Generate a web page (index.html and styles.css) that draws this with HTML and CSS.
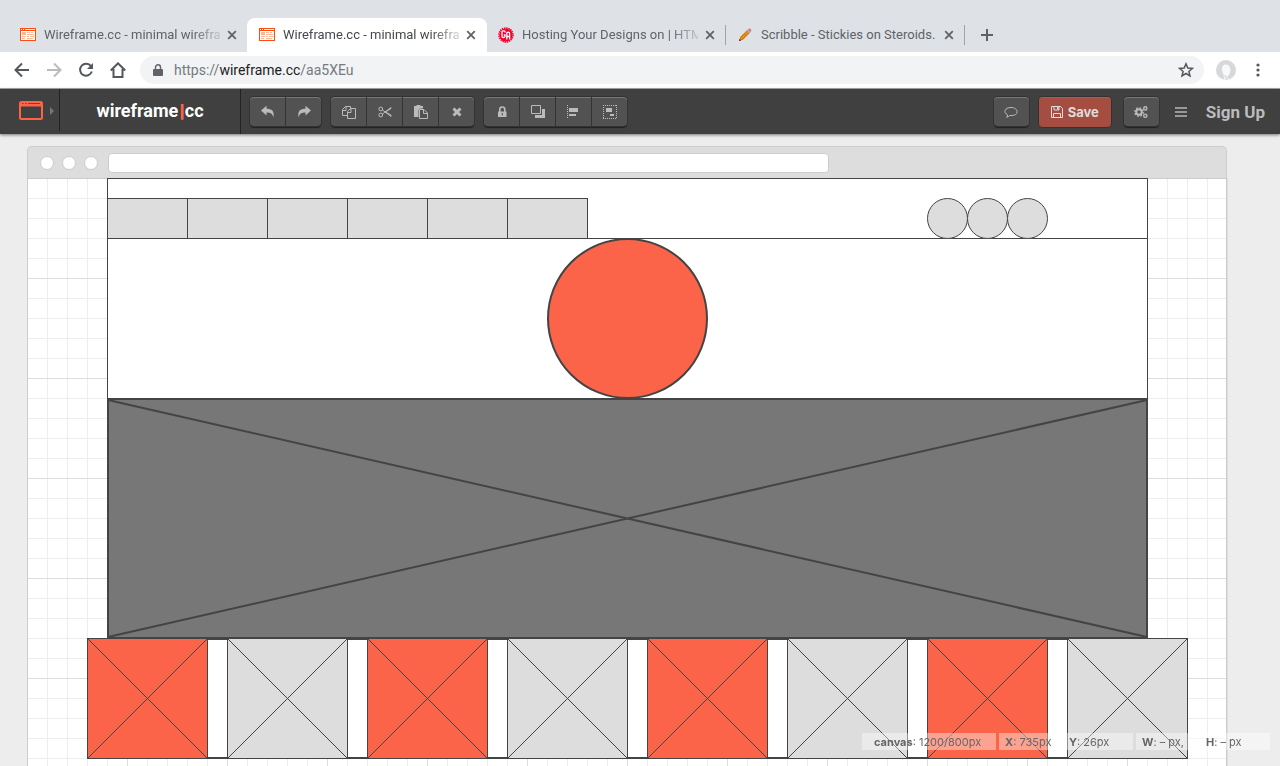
FILE: index.html
```html
<!DOCTYPE html>
<html lang="en">
<head>
<meta charset="utf-8">
<title>Wireframe.cc - minimal wireframing tool</title>
<link rel="stylesheet" href="styles.css">
</head>
<body>
<svg class="defs" aria-hidden="true">
  <symbol id="fav-wf" viewBox="0 0 16 14">
    <rect x="0" y="0" width="16" height="13" fill="#fff"/>
    <path d="M0 0h16v3H0zM0 3h1v10H0zM15 3h1v10h-1zM0 12h16v1H0z" fill="#fa4f14"/>
    <path d="M1 1h1v1H1zM3 1h1v1H3zM5 1h10v1H5z" fill="#fff"/>
    <path d="M2 4h4v3H2zM2 8h4v1H2zM2 10h3v1H2zM7 4h3v1H7zM11 4h2v1h-2zM7 6h7v1H7zM7 8h2v1H7zM10 8h4v1h-4zM7 10h6v1H7z" fill="#fdb594"/>
  </symbol>
  <symbol id="x" viewBox="0 0 10 10"><path d="M1.2 1.2l7.6 7.6M8.8 1.2L1.2 8.8" stroke="#5f6368" stroke-width="1.8"/></symbol>
</svg>
<header class="tabs">
  <div class="tab">
    <svg class="fav"><use href="#fav-wf"/></svg>
    <span class="tab-title fade">Wireframe.cc - minimal wirefra</span>
    <button class="close" aria-label="Close tab"><svg><use href="#x"/></svg></button>
  </div>
  <div class="tab active">
    <svg class="fav"><use href="#fav-wf"/></svg>
    <span class="tab-title fade">Wireframe.cc - minimal wirefra</span>
    <button class="close" aria-label="Close tab"><svg><use href="#x"/></svg></button>
  </div>
  <div class="tab sep">
    <svg class="fav ga" viewBox="0 0 16 16"><circle cx="8" cy="8" r="6.6" fill="#f6002d"/><circle cx="8" cy="8" r="7" fill="none" stroke="#f6002d" stroke-width="1.6" stroke-dasharray="1.4 .8"/><path d="M7 5.4V4.600q0-.8-1.400-.8T4 4.600v5q0 .9 1.400.9T7 9.600V8H5.800M8.800 12.500V6.200q0-1 1.400-1t1.400 1v6.300M8.800 9.500h2.800" fill="none" stroke="#fff" stroke-width="1.300"/></svg>
    <span class="tab-title fade">Hosting Your Designs on | HTM</span>
    <button class="close" aria-label="Close tab"><svg><use href="#x"/></svg></button>
  </div>
  <div class="tab sep">
    <svg class="fav pencil" viewBox="0 0 16 16"><path d="M2 14l1.200-4L10 3.200l2.800 2.800L6 12.800z" fill="#d97a06"/><path d="M4.500 11.500l6.800-6.800" stroke="#f8b64c" stroke-width="1" stroke-dasharray="1.500 .6"/><path d="M9.600 3.600l1.400-1.400L13.800 5l-1.400 1.400z" fill="#a9b0b5"/><path d="M11 2.200q1.400-1.400 2.600-.2 1.400 1.400.2 3z" fill="#f0656b"/><path d="M2 14l.6-2 1.400 1.400z" fill="#222"/></svg>
    <span class="tab-title">Scribble - Stickies on Steroids.</span>
    <button class="close" aria-label="Close tab"><svg><use href="#x"/></svg></button>
  </div>
  <button class="new-tab" aria-label="New tab"><svg viewBox="0 0 12 12"><path d="M6 0v12M0 6h12" stroke="#5f6368" stroke-width="2"/></svg></button>
</header>
<nav class="browser-bar">
  <button aria-label="Back"><svg viewBox="0 0 16 16"><path d="M15 8H2M8 1.500L1.500 8 8 14.500"/></svg></button>
  <button aria-label="Forward" class="dim"><svg viewBox="0 0 16 16"><path d="M1 8h13M8 1.500L14.500 8 8 14.500"/></svg></button>
  <button aria-label="Reload"><svg viewBox="0 0 16 16"><path d="M13 4.200A6 6 0 1 0 13.800 9.500"/><path d="M15 1v6H9z" class="solid"/></svg></button>
  <button aria-label="Home"><svg viewBox="0 0 16 16"><path d="M.8 8.500L8 1.300l7.200 7.200M3.500 7v8h9V7"/></svg></button>
  <div class="omnibox">
    <svg class="lock" viewBox="0 0 10 13"><path d="M1 5h8q1 0 1 1v5q0 1-1 1H1q-1 0-1-1V6q0-1 1-1z" fill="#5f6368"/><path d="M2.500 5.500V3.300a2.500 2.500 0 0 1 5 0v2.200" fill="none" stroke="#5f6368" stroke-width="1.400"/></svg>
    <a class="url" href="#">https://<b>wireframe.cc</b>/aa5XEu</a>
    <button aria-label="Bookmark"><svg viewBox="0 0 16 16"><path class="thin" d="M8 1.800l1.800 4.300 4.600.3-3.500 3 1.100 4.600L8 11.500 4 14l1.100-4.600-3.500-3 4.600-.3z"/></svg></button>
  </div>
  <button aria-label="Profile" class="avatar"><svg viewBox="0 0 20 20"><circle cx="10" cy="10" r="10" fill="#d8d8d8"/><path d="M10 4.500c-3 0-4.300 2.500-4 5.500.2 2.500 1.500 3.500 1.700 5L8 19.500q3 .6 5-.4c-1.500-1.600-1-3 .3-5 1-1.600 1.200-3.500.9-5.500-.4-2.500-1.900-4.100-4.200-4.100z" fill="#f8f9fa"/><path d="M9 15l1.500 4.500 1.500-3" fill="none" stroke="#d6e3ec"/></svg></button>
  <button aria-label="Menu" class="dots"><svg viewBox="0 0 4 14"><circle cx="2" cy="2" r="1.600"/><circle cx="2" cy="7" r="1.600"/><circle cx="2" cy="12" r="1.600"/></svg></button>
</nav>
<div class="appbar">
  <button class="brand-menu" aria-label="Wireframes">
    <svg class="logo" viewBox="0 0 24 20"><rect x="1" y="1" width="22" height="17" rx="1.500" fill="none" stroke="#ff6347" stroke-width="2"/><path d="M1 3h22M1 4.500h22" stroke="#ff6347" stroke-width="2"/><path d="M3 2.500h1.500M6 2.500h1.500M9 2.500h12" stroke="#7c4238" stroke-width="1"/></svg>
    <svg class="caret" viewBox="0 0 4 8"><path d="M0 0l4 4-4 4z" fill="#777"/></svg>
  </button>
  <a class="brand" href="#">wireframe<span>|</span>cc</a>
  <div class="tools">
    <div class="group">
      <button aria-label="Undo"><svg viewBox="0 0 14 14"><path d="M0 5.500L5.500.8v3c5 0 8.200 2 6.900 8.700C11.600 8.800 9.500 7.500 5.500 7.500v3z"/></svg></button>
      <button aria-label="Redo"><svg viewBox="0 0 14 14"><path d="M14 5.500L8.500.8v3c-5 0-8.200 2-6.900 8.700C2.400 8.800 4.500 7.500 8.500 7.500v3z"/></svg></button>
    </div>
    <div class="group">
      <button aria-label="Copy"><svg viewBox="0 0 14 14"><path class="line" d="M5.500 10.500h-5V4.500l3-3h5v2.500M.5 5.500H4v-4M5.500 6.500v7h8v-10H8.500zM5.500 7.500H9v-4"/></svg></button>
      <button aria-label="Cut"><svg viewBox="0 0 14 14"><path class="line" d="M4.500 5L13 11.500V10L7.500 7 13 3.500V2.500L4.500 9"/><circle class="line" cx="2.800" cy="4" r="1.900"/><circle class="line" cx="2.800" cy="10" r="1.900"/></svg></button>
      <button aria-label="Paste"><svg viewBox="0 0 14 14"><path d="M0 1h2.500V0h4v1H9v2.500H6L4.500 5v7H0z"/><path class="line" d="M5.500 4.500v9h8V8L10 4.500zM9.500 4.500v4h4"/></svg></button>
      <button aria-label="Delete"><svg viewBox="0 0 14 14"><path d="M3.500 3.500l7 7M10.500 3.500l-7 7" stroke="#bbb" stroke-width="3"/></svg></button>
    </div>
    <div class="group">
      <button aria-label="Lock"><svg viewBox="0 0 14 14"><path fill-rule="evenodd" d="M3 6.500h8.500V12H3zM6.800 8v2.500h1V8z"/><path d="M4.800 7V4.500a2.500 2.500 0 0 1 5 0V7" fill="none" stroke="#bbb" stroke-width="1.600"/></svg></button>
      <button aria-label="Arrange"><svg viewBox="0 0 14 14"><path class="line" d="M.5.500h9v8h-9z"/><path d="M11 4h3v9H4v-3h7z"/></svg></button>
      <button aria-label="Align"><svg viewBox="0 0 14 14"><path d="M.5 0v14" stroke="#bbb" stroke-dasharray="1 1"/><path d="M2 3h9v4H2zM2 9h7v2H2z"/></svg></button>
      <button aria-label="Group"><svg viewBox="0 0 14 14"><path d="M0 .5h14M0 13.500h14M.5 0v14M13.500 0v14" fill="none" stroke="#bbb" stroke-dasharray="1 1"/><path d="M3 3h6v4H3zM7 9h4v2H7z"/></svg></button>
    </div>
  </div>
  <div class="actions">
    <div class="group"><button aria-label="Comments"><svg viewBox="0 0 14 14"><path class="line" d="M3.500 9.800C-1 7.500.6 2.500 7 2.500s8.300 5.800 3.200 7.600q-2 .7-4.400.4-1.500 1.500-3.300 1.700 1.200-1 1-2.400z"/></svg></button></div>
    <button class="save"><svg viewBox="0 0 12 12"><path class="line" d="M.5.500h9l2 2v9H.5zM3 .5v3.500h5V.500M2.500 11.500v-4h7v4"/><path d="M6 0h1.500v3.500H6z"/></svg>Save</button>
    <div class="group"><button aria-label="Settings"><svg viewBox="0 0 14 14"><circle cx="5" cy="7" r="2.800" fill="none" stroke="#bbb" stroke-width="2"/><circle cx="5" cy="7" r="4.200" fill="none" stroke="#bbb" stroke-width="1.400" stroke-dasharray="1.700 1.600"/><circle cx="11.300" cy="3.400" r="1.600" fill="none" stroke="#bbb" stroke-width="1.400"/><circle cx="11.300" cy="10.700" r="1.600" fill="none" stroke="#bbb" stroke-width="1.400"/></svg></button></div>
    <button class="burger" aria-label="Menu"><svg viewBox="0 0 12 10"><path d="M0 1h12M0 5h12M0 9h12" stroke="#999" stroke-width="2"/></svg></button>
    <a class="signup" href="#">Sign Up</a>
  </div>
</div>
<main class="workspace">
  <section class="window">
    <div class="window-bar">
      <i></i><i></i><i></i>
      <input type="text" aria-label="Wireframe address">
    </div>
    <svg class="canvas" viewBox="0 0 1201 801" width="1201" height="801">
      <defs>
        <pattern id="minor" width="20" height="20" patternUnits="userSpaceOnUse"><path d="M0 .5h20M.5 0v20" stroke="#eee"/></pattern>
        <pattern id="major" width="100" height="100" patternUnits="userSpaceOnUse"><path d="M0 .5h100M.5 0v100" stroke="#ddd"/></pattern>
        <symbol id="tile" viewBox="0 0 121 121"><rect x=".5" y=".5" width="120" height="120"/><path d="M.5.500l120 120M120.500.500l-120 120"/></symbol>
      </defs>
      <rect width="1201" height="801" fill="#fff"/>
      <rect width="1201" height="801" fill="url(#minor)"/>
      <rect width="1201" height="801" fill="url(#major)"/>
      <path d="M0 .5h1200M.5 0v801M1199.500 0v801" stroke="#ccc"/>
      <g class="ink">
        <rect class="white" x="80.500" y=".5" width="1040" height="60"/>
        <rect class="white" x="80.500" y="60.500" width="1040" height="160"/>
        <g class="grey">
          <rect x="80.500" y="20.500" width="80" height="40"/>
          <rect x="160.500" y="20.500" width="80" height="40"/>
          <rect x="240.500" y="20.500" width="80" height="40"/>
          <rect x="320.500" y="20.500" width="80" height="40"/>
          <rect x="400.500" y="20.500" width="80" height="40"/>
          <rect x="480.500" y="20.500" width="80" height="40"/>
          <circle cx="920.500" cy="40.500" r="20"/>
          <circle cx="960.500" cy="40.500" r="20"/>
          <circle cx="1000.500" cy="40.500" r="20"/>
        </g>
        <circle class="red thick" cx="600.500" cy="140.500" r="79.500"/>
        <rect class="white thick" x="81" y="461" width="1039" height="119"/>
        <rect class="dark thick" x="81" y="221" width="1039" height="239"/>
        <path class="thick" d="M81 222l1039 237M1120 222L81 459"/>
        <g class="red">
          <use href="#tile" x="60" y="460" width="121" height="121"/>
          <use href="#tile" x="340" y="460" width="121" height="121"/>
          <use href="#tile" x="620" y="460" width="121" height="121"/>
          <use href="#tile" x="900" y="460" width="121" height="121"/>
        </g>
        <g class="grey">
          <use href="#tile" x="200" y="460" width="121" height="121"/>
          <use href="#tile" x="480" y="460" width="121" height="121"/>
          <use href="#tile" x="760" y="460" width="121" height="121"/>
          <use href="#tile" x="1040" y="460" width="121" height="121"/>
        </g>
      </g>
    </svg>
  </section>
</main>
<footer class="status">
  <p class="size"><span><b>canvas</b>: 1200/800px</span></p>
  <p><span><b>X</b>: 735px</span><span><b>Y</b>: 26px</span></p>
  <p><span><b>W</b>: – px,</span><span><b>H</b>: – px</span></p>
</footer>
</body>
</html>
```
FILE: styles.css
```css
* { box-sizing: border-box; }
body {
  margin: 0;
  height: 100vh;
  display: flex;
  flex-direction: column;
  overflow: hidden;
  background: #ededed;
  font-family: Inter, "Liberation Sans", sans-serif;
}
button { border: 0; padding: 0; background: none; font: inherit; color: inherit; display: flex; align-items: center; justify-content: center; }
a { text-decoration: none; color: inherit; }
svg { display: block; flex: none; }
.defs { position: absolute; width: 0; height: 0; }

.tabs { flex: none; display: flex; height: 52px; padding: 18px 0 0 8px; background: #dee1e6; }
.tab { display: flex; align-items: center; width: 239px; height: 34px; padding: 0 10px 0 12px; font-size: 13px; line-height: 14px; color: #5f6368; }
.tab.active { width: 240px; padding-right: 11px; background: #fff; border-radius: 8px 8px 0 0; color: #45494d; }
.tab.sep { padding: 0 11px; background: linear-gradient(#a0a4a9, #a0a4a9) right 7px / 1px 20px no-repeat; }
.fav { width: 16px; height: 14px; }
.ga, .pencil { height: 16px; }
.tab-title { flex: 1; min-width: 0; margin-left: 8px; white-space: nowrap; font-family: Roboto, sans-serif; }
.fade { -webkit-mask-image: linear-gradient(to right, #000 84%, transparent 104%); mask-image: linear-gradient(to right, #000 84%, transparent 104%); }
.close { margin-left: 7px; }
.close svg { width: 10px; height: 10px; }
.new-tab { width: 44px; height: 34px; }
.new-tab svg { width: 12px; height: 12px; }

.browser-bar { flex: none; display: flex; align-items: center; height: 37px; padding: 0 6px; background: #fff; border-bottom: 1px solid #aaa; }
.browser-bar button { width: 32px; height: 28px; }
.browser-bar svg { width: 16px; height: 16px; fill: none; stroke: #54575d; stroke-width: 2; }
.browser-bar .dim svg { stroke: #bbb; }
.browser-bar .solid { fill: #54575d; stroke: none; }
.browser-bar .thin { stroke-width: 1.5px; }
.omnibox { flex: 1; display: flex; align-items: center; height: 28px; margin: 0 6px; padding: 0 2px 0 13px; background: #f1f3f4; border-radius: 14px; }
.browser-bar .lock { width: 10px; height: 13px; stroke: none; }
.url { flex: 1; margin-left: 11px; font: 14px Roboto, sans-serif; color: #757a80; }
.url b { font-weight: 400; color: #202124; }
.browser-bar .avatar svg { width: 20px; height: 20px; stroke: none; }
.browser-bar .dots svg { width: 4px; height: 14px; fill: #54575d; stroke: none; }

.appbar { flex: none; display: flex; align-items: center; height: 45px; background: #404040; color: #bbb; box-shadow: 0 1px 3px rgba(0, 0, 0, .5); z-index: 1; }
.brand-menu { align-self: flex-start; width: 60px; height: 42px; padding: 2px 5px 0 19px; justify-content: space-between; border-right: 1px solid #222; }
.logo { width: 24px; height: 20px; }
.caret { width: 4px; height: 8px; }
.brand { align-self: stretch; width: 181px; border-right: 1px solid #222; text-align: center; font: bold 18px/44px Roboto, sans-serif; color: #fff; }
.brand span { margin: 0 1px; color: #ff6347; text-shadow: 1px 0 #ff6347; }
.tools { display: flex; gap: 10px; margin-left: 9px; }
.group { display: flex; border-radius: 4px; background: #525252; box-shadow: 0 0 0 1px #333, 0 2px 1px #222, inset 0 1px #777; }
.group button { width: 36px; height: 29px; border-right: 1px solid #333; }
.group button:last-child { width: 35px; border-right: 0; }
.group svg { width: 14px; height: 14px; fill: #bbb; }
.line { fill: none; stroke: #bbb; stroke-width: 1px; }
.actions { display: flex; align-items: center; margin-left: auto; padding-right: 15px; }
.save { gap: 5px; width: 72px; height: 30px; margin: 0 13px 0 10px; border-radius: 4px; background: #a54d40; box-shadow: 0 0 0 1px #333, inset 0 1px #ae5b4f; color: #ddd; font-size: 13px; font-weight: 700; }
.save svg { width: 12px; height: 12px; fill: #ddd; }
.save .line { stroke: #ddd; fill: none; }
.burger { margin-left: 16px; }
.burger svg { width: 12px; height: 10px; }
.signup { margin-left: 19px; font: bold 17px Roboto, sans-serif; color: #bbb; }

.workspace { flex: 1; min-height: 0; overflow: hidden; padding: 12px 27px 0; }
.window { width: 1200px; }
.window-bar { display: flex; align-items: center; gap: 8px; height: 32px; padding: 0 12px; background: #ddd; border: 1px solid #ccc; border-bottom: 0; border-radius: 5px 5px 0 0; }
.window-bar i { width: 14px; height: 14px; border: 1px solid #ccc; border-radius: 50%; background: #fff; }
.window-bar input { width: 721px; height: 20px; margin-left: 2px; padding: 0 6px; border: 1px solid #ccc; border-radius: 4px; background: #fff; }
.ink { fill: none; stroke: #444; stroke-width: 1; }
.white { fill: #fff; }
.grey { fill: #ddd; }
.red { fill: #fb6449; }
.dark { fill: #777; }
.thick { stroke-width: 2; }

.status { position: fixed; right: 10px; bottom: 16px; z-index: 2; display: flex; gap: 3px; font-size: 11px; line-height: 17px; color: #666; }
.status p { display: flex; width: 134px; height: 17px; margin: 0; padding: 1px 0 0 6px; background: rgba(255, 255, 255, .4); }
.status .size { padding-left: 12px; }
.status span { width: 65px; white-space: nowrap; }
```
